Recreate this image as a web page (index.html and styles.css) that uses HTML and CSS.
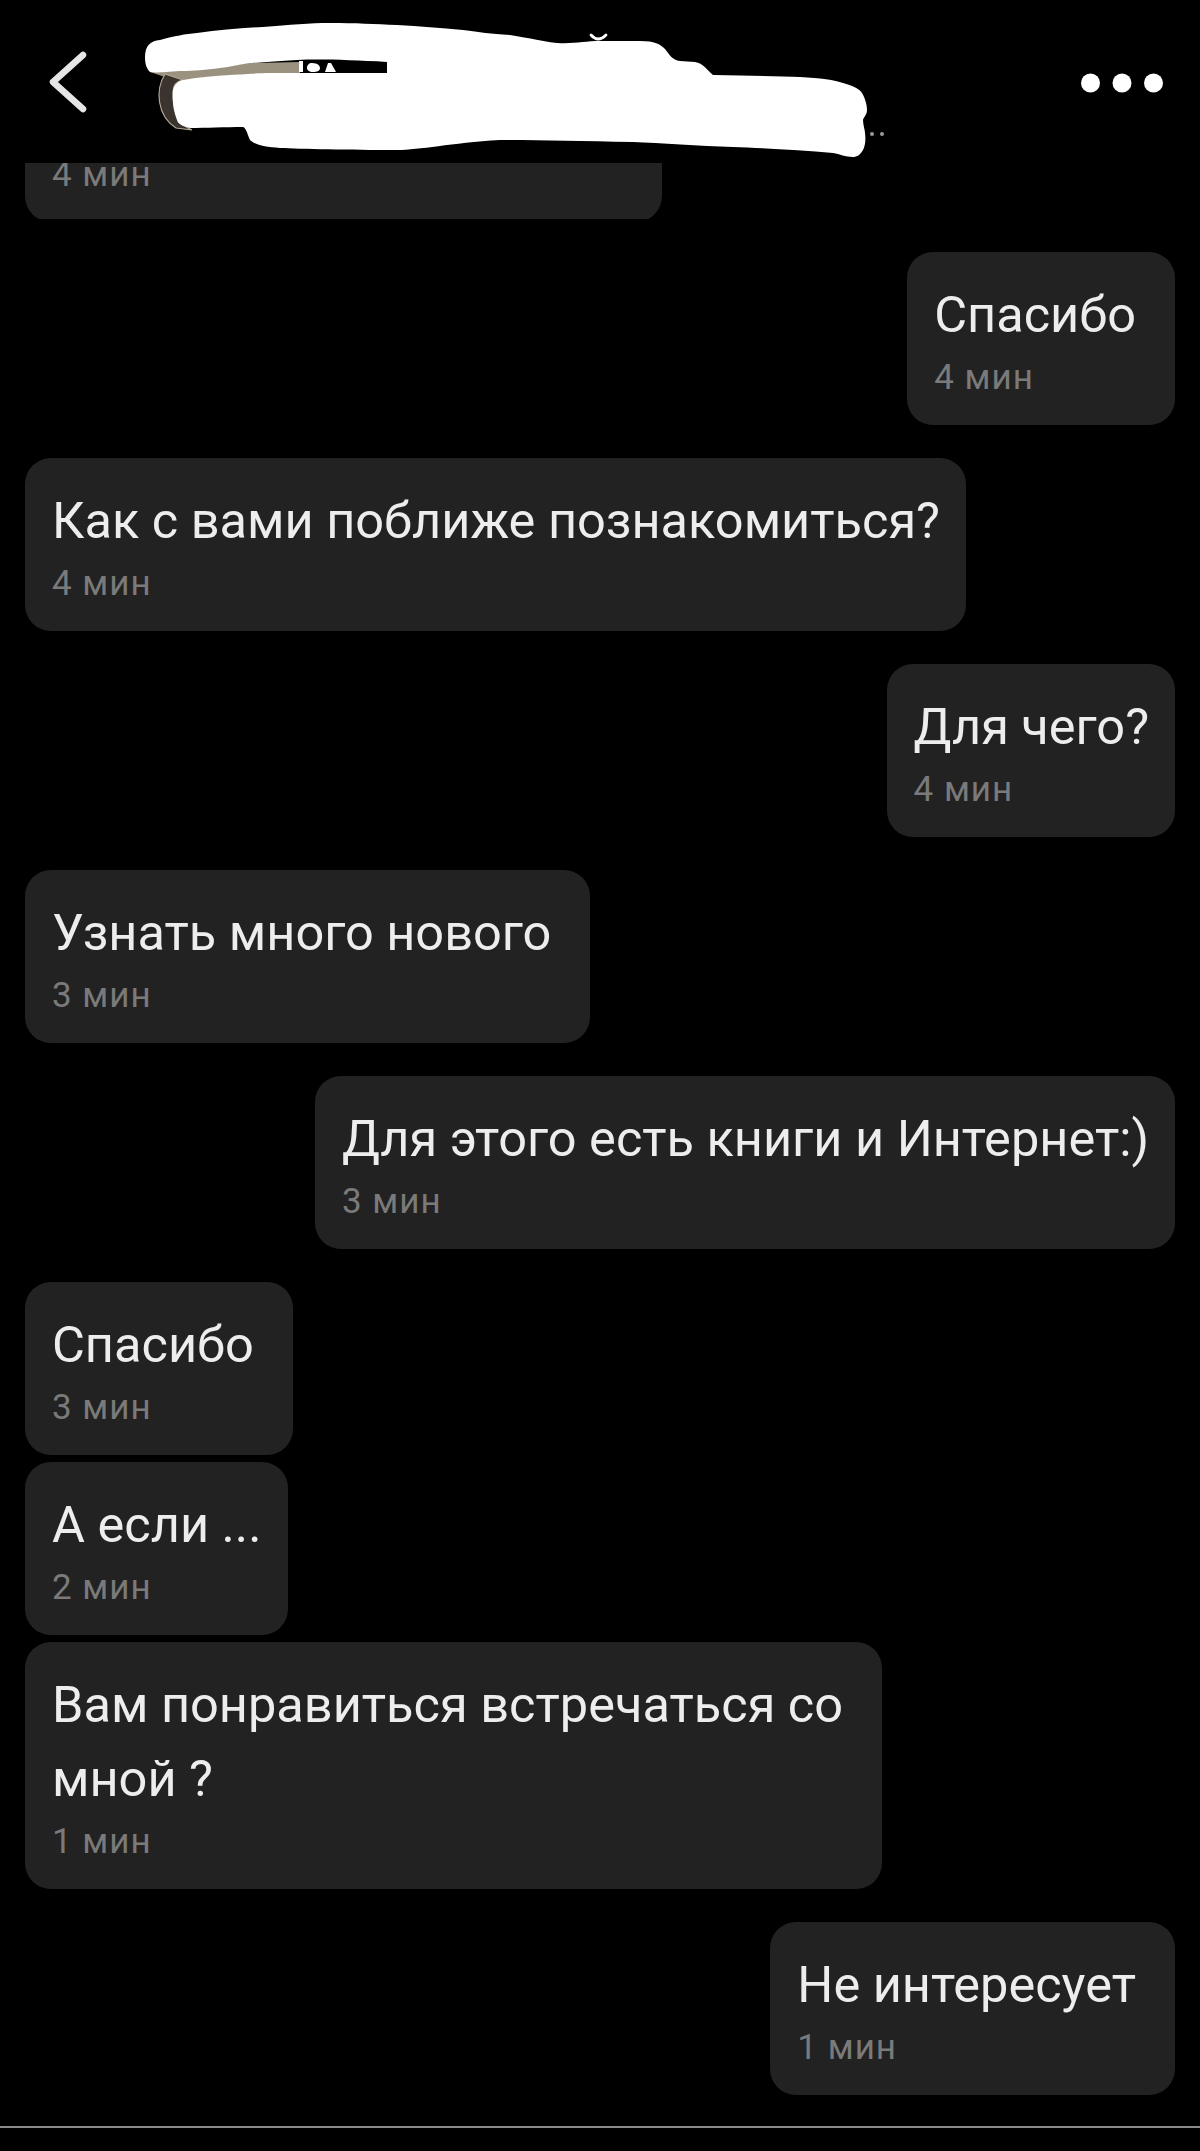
FILE: index.html
```html
<!DOCTYPE html>
<html lang="ru">
<head>
<meta charset="utf-8">
<title>Чат</title>
<link rel="stylesheet" href="styles.css">
</head>
<body>
<div class="screen">
  <header class="topbar">
    <svg class="back" viewBox="0 0 48 74" width="48" height="74">
      <polyline points="39,10 9,37 39,64" fill="none" stroke="#e6e6e6" stroke-width="6.5" stroke-linecap="round" stroke-linejoin="round"/>
    </svg>
    <svg class="redact" viewBox="130 10 760 150" width="760" height="150">
      <path d="M150,72 L253,63 L300,62 L300,78 L253,77 L183,83 Z" fill="#9b917f"/>
      <path d="M165,74 C155,90 157,116 176,128 L192,130 C178,124 173,112 173,92 C173,84 178,81 183,80 Z" fill="#3b342e" stroke="#b3a896" stroke-width="1.2"/>
      <path d="M145,57 C145,46 150,41 160,40 C175,36 185,34 197,33 C220,30 240,28 263,27 C290,25 310,23 330,23 C355,23 375,24 397,25 C420,26 440,28 463,30 C480,32 490,34 510,35 C530,38 545,42 557,43 C575,44 585,41 600,41 L640,41 C655,41 660,44 665,49 C670,55 672,60 680,61 L695,62 C703,63 707,70 713,75 L713,85 L387,80 L387,62 C350,60 320,59 297,60 C280,61 265,62 253,63 C240,64 230,67 220,68 C205,70 195,71 180,71 C165,72 155,73 150,72 C146,68 145,63 145,57 Z" fill="#ffffff"/>
      <path d="M183,80 C200,77 215,76 230,75 C250,74 260,73 270,73 L387,73 L387,80 L713,75 C750,76 780,76 800,77 C820,78 835,80 843,83 C855,86 860,90 862,93 C866,100 867,106 867,110 C867,115 863,118 863,120 C863,125 865,130 865,133 C866,140 865,146 863,150 C860,155 857,157 853,157 C845,157 840,154 833,153 C800,150 760,148 733,147 C700,146 660,143 633,142 C580,141 540,140 500,140 C450,143 420,150 397,150 C350,150 300,149 280,148 C265,147 255,145 250,140 C247,133 246,128 243,127 C225,127 205,128 190,128 C182,126 178,124 177,120 C173,110 172,100 173,90 C174,85 178,81 183,80 Z" fill="#ffffff"/>
      <path d="M299,61 L303,61 L303,72 L299,72 Z M312,63 C318,63 320,66 320,68 C320,71 317,72 313,72 C309,72 307,70 307,68 C307,65 309,63 312,63 Z M328,63 L331,63 L336,72 L325,72 Z" fill="#ffffff"/>
      <path d="M591,35 Q598,43 606,35" fill="none" stroke="#ffffff" stroke-width="2.8" stroke-linecap="round"/>
      <circle cx="872" cy="134" r="2" fill="#9a9a9a"/>
      <circle cx="882" cy="134" r="2" fill="#9a9a9a"/>
    </svg>
    <svg class="more" viewBox="0 0 82 20" width="82" height="20">
      <circle cx="9.5" cy="10" r="9.5" fill="#ffffff"/>
      <circle cx="41" cy="10" r="9.5" fill="#ffffff"/>
      <circle cx="72.5" cy="10" r="9.5" fill="#ffffff"/>
    </svg>
  </header>

  <main class="thread">
    <div class="clip">
      <div class="bubble partial">
        <div class="time">4 мин</div>
      </div>
    </div>

    <div class="group out">
      <div class="bubble trail"><div class="text">Спасибо</div><div class="time">4 мин</div></div>
    </div>

    <div class="group in">
      <div class="bubble"><div class="text">Как с вами поближе познакомиться?</div><div class="time">4 мин</div></div>
    </div>

    <div class="group out">
      <div class="bubble"><div class="text">Для чего?</div><div class="time">4 мин</div></div>
    </div>

    <div class="group in">
      <div class="bubble trail"><div class="text">Узнать много нового</div><div class="time">3 мин</div></div>
    </div>

    <div class="group out">
      <div class="bubble"><div class="text">Для этого есть книги и Интернет:)</div><div class="time">3 мин</div></div>
    </div>

    <div class="group in">
      <div class="bubble trail"><div class="text">Спасибо</div><div class="time">3 мин</div></div>
      <div class="bubble"><div class="text">А если ...</div><div class="time">2 мин</div></div>
      <div class="bubble wide"><div class="text">Вам понравиться встречаться со мной ?</div><div class="time">1 мин</div></div>
    </div>

    <div class="group out">
      <div class="bubble trail"><div class="text">Не интересует</div><div class="time">1 мин</div></div>
    </div>
  </main>

  <div class="bottomline"></div>
</div>
</body>
</html>
```

FILE: styles.css
```css
html, body {
  margin: 0;
  padding: 0;
  background: #000000;
}

body {
  width: 1200px;
  height: 2151px;
  overflow: hidden;
  font-family: Roboto, "Noto Sans", "Liberation Sans", sans-serif;
  color: #ececec;
}

.screen {
  display: flex;
  flex-direction: column;
}

.topbar {
  height: 163px;
  display: flex;
  align-items: flex-start;
  padding-left: 44px;
  background: #000000;
  position: relative;
  z-index: 2;
}

.back {
  display: block;
  margin-top: 45px;
  flex: none;
}

.redact {
  display: block;
  margin-top: 10px;
  margin-left: 38px;
  flex: none;
}

.more {
  display: block;
  margin-top: 73px;
  margin-left: auto;
  margin-right: 37px;
  flex: none;
}

.thread {
  display: flex;
  flex-direction: column;
  gap: 33px;
  padding: 0 25px;
}

.clip {
  height: 56px;
  overflow: hidden;
}

.group {
  display: flex;
  flex-direction: column;
  gap: 7px;
}

.group.in {
  align-items: flex-start;
}

.group.out {
  align-items: flex-end;
}

.bubble {
  background: #222222;
  border-radius: 26px;
  padding: 26px 26px 24px 27px;
  max-width: 1150px;
  box-sizing: border-box;
}

.bubble.trail {
  padding-right: 39px;
}

.bubble.partial {
  width: 637px;
  margin-top: -14px;
  padding-top: 0;
  border-radius: 0 0 26px 26px;
}

.bubble.wide {
  width: 857px;
}

.text {
  font-size: 50.5px;
  line-height: 74px;
  color: #ededed;
  white-space: pre-wrap;
}

.time {
  margin-top: 3px;
  font-size: 35px;
  line-height: 46px;
  letter-spacing: 1px;
  color: #7a7a7a;
}

.bottomline {
  margin-top: 31px;
  height: 2px;
  background: #8a8a8a;
}
```
